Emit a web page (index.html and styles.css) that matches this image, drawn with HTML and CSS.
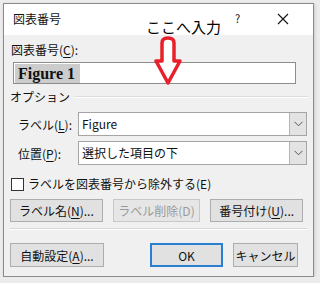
FILE: index.html
```html
<!DOCTYPE html>
<html>
<head>
    <title>図表番号</title>
    <link rel="stylesheet" href="styles.css">
</head>
<body>

<div class="dialog">
    <div class="titlebar">
        <span class="title">図表番号</span>
        <span class="help">?</span>
        <span class="close">
            <svg width="12" height="12" viewBox="0 0 12 12"><path d="M1 1 L11 11 M11 1 L1 11" stroke="#111" stroke-width="1.1" fill="none"/></svg>
        </span>
    </div>

    <div class="content">
        <div class="caption-label">図表番号(<u>C</u>):</div>
        <div class="caption-input"><span class="sel">Figure 1</span></div>

        <div class="group-head">
            <span>オプション</span>
            <div class="group-line"></div>
        </div>

        <div class="field-row">
            <span class="field-label">ラベル(<u>L</u>):</span>
            <div class="combo">
                <span class="combo-text">Figure</span>
                <span class="combo-btn"><svg width="9" height="6" viewBox="0 0 9 6"><path d="M0.5 0.8 L4.5 4.8 L8.5 0.8" stroke="#555" stroke-width="1" fill="none"/></svg></span>
            </div>
        </div>
        <div class="field-row second">
            <span class="field-label">位置(<u>P</u>):</span>
            <div class="combo">
                <span class="combo-text">選択した項目の下</span>
                <span class="combo-btn"><svg width="9" height="6" viewBox="0 0 9 6"><path d="M0.5 0.8 L4.5 4.8 L8.5 0.8" stroke="#555" stroke-width="1" fill="none"/></svg></span>
            </div>
        </div>

        <div class="check-row">
            <span class="checkbox"></span>
            <span>ラベルを図表番号から除外する(E)</span>
        </div>

        <div class="button-row">
            <div class="btn w94">ラベル名(<u>N</u>)...</div>
            <div class="btn w90 disabled">ラベル削除(D)</div>
            <div class="btn w94">番号付け(<u>U</u>)...</div>
        </div>

        <div class="separator"></div>

        <div class="button-row bottom">
            <div class="btn w94 tall">自動設定(<u>A</u>)...</div>
            <div class="spacer"></div>
            <div class="btn ok tall">OK</div>
            <div class="btn cancel tall">キャンセル</div>
        </div>
    </div>

    <div class="note">ここへ入力</div>
    <svg class="arrow" width="28" height="50" viewBox="0 0 28 50">
        <path d="M8 25 L8 7 Q8 2 14 2 Q20 2 20 7 L20 25 L26 25 L14 47 L2 25 Z" fill="#fff" stroke="#e8202a" stroke-width="3.5" stroke-linejoin="round"/>
    </svg>
</div>

</body>
</html>
```

FILE: styles.css
```css
body {
    margin: 0;
    background-color: #ececec;
    font-family: "Noto Sans CJK JP", "Noto Sans", sans-serif;
    font-size: 12px;
    color: #111;
}
.dialog {
    position: relative;
    margin: 3px 0 0 3px;
    width: 309px;
    height: 272px;
    border: 1px solid #8a8a8a;
    background-color: #f0f0f0;
    box-shadow: 1px 1px 3px rgba(0, 0, 0, 0.15);
}
.titlebar {
    display: flex;
    align-items: center;
    height: 31px;
    background-color: #fff;
    padding-left: 9px;
}
.title {
    font-size: 12px;
    line-height: 16px;
    margin-top: -2px;
}
.help {
    margin-left: 174px;
    font-size: 11px;
    margin-top: -4px;
}
.close {
    display: flex;
    margin-left: 37px;
    margin-top: -2px;
}
.content {
    padding-left: 7px;
}
.caption-label {
    line-height: 16px;
    margin-top: 7px;
}
u {
    text-decoration-thickness: 1px;
    text-underline-offset: 2px;
}
.caption-input {
    box-sizing: border-box;
    margin: 4px 0 0 2px;
    width: 283px;
    height: 22px;
    border: 1px solid #8d8d8d;
    background-color: #fff;
    padding: 1px 0 0 1px;
}
.sel {
    display: inline-block;
    height: 19px;
    padding: 0 5px 0 3px;
    background-color: #cccccc;
    font-family: "Liberation Serif", serif;
    font-weight: bold;
    font-size: 16px;
    line-height: 20px;
}
.group-head {
    display: flex;
    align-items: center;
    margin-top: 5px;
    height: 16px;
    line-height: 16px;
    margin-left: -1px;
}
.group-line {
    flex: 1;
    height: 0;
    border-top: 1px solid #dcdcdc;
    border-bottom: 1px solid #fff;
    margin: 0 5px 0 5px;
}
.field-row {
    display: flex;
    align-items: center;
    margin-top: 7px;
    height: 24px;
}
.field-row.second {
    margin-top: 5px;
}
.field-label {
    width: 60px;
    padding-left: 7px;
}
.combo {
    box-sizing: border-box;
    display: flex;
    width: 229px;
    height: 24px;
    border: 1px solid #a5a5a5;
    background-color: #fff;
}
.combo-text {
    flex: 1;
    padding-left: 3px;
    line-height: 22px;
}
.combo-btn {
    width: 16px;
    display: flex;
    align-items: center;
    justify-content: center;
    background-color: #e3e3e3;
    border-left: 1px solid #b5b5b5;
}
.check-row {
    display: flex;
    align-items: center;
    margin-top: 11px;
    height: 16px;
    line-height: 16px;
}
.checkbox {
    box-sizing: border-box;
    width: 13px;
    height: 13px;
    border: 1px solid #333;
    background-color: #fff;
    margin-right: 4px;
}
.button-row {
    display: flex;
    margin-top: 7px;
    margin-left: -1px;
}
.button-row.bottom {
    margin-top: 13px;
}
.btn {
    box-sizing: border-box;
    height: 23px;
    border: 1px solid #adadad;
    background-color: #e1e1e1;
    display: flex;
    align-items: center;
    justify-content: center;
    margin-right: 10px;
}
.btn.tall {
    height: 24px;
}
.w94 {
    width: 94px;
}
.w90 {
    width: 89px;
}
.btn.disabled {
    color: #9a9a9a;
    border-color: #c8c8c8;
    background-color: #e6e6e6;
}
.spacer {
    width: 36px;
}
.btn.ok {
    width: 73px;
    border: 2px solid #2b7fd0;
}
.btn.cancel {
    width: 65px;
    margin-left: 0;
}
.separator {
    margin: 6px 6px 0 -1px;
    border-top: 1px solid #d8d8d8;
    border-bottom: 1px solid #fff;
}
.note {
    position: absolute;
    left: 142px;
    top: 13px;
    font-size: 15px;
    line-height: 20px;
    color: #000;
}
.arrow {
    position: absolute;
    left: 150px;
    top: 32px;
}
```
